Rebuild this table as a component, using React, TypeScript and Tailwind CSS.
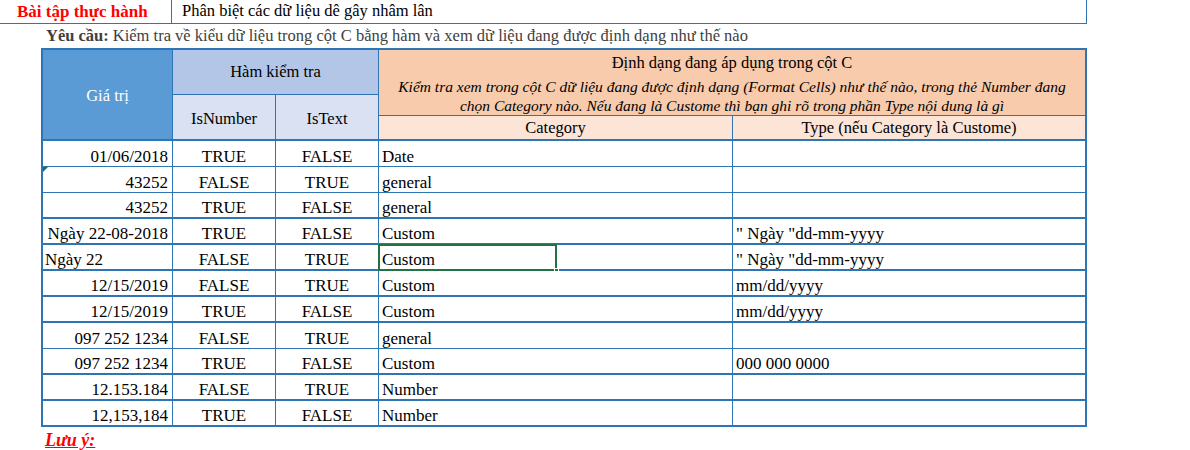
import React from "react";

const rows = [
  { v: "01/06/2018", right: true, n: "TRUE", t: "FALSE", cat: "Date", type: "", thin: true },
  { v: "43252", right: true, n: "FALSE", t: "TRUE", cat: "general", type: "", thin: true, flag: true },
  { v: "43252", right: true, n: "TRUE", t: "FALSE", cat: "general", type: "" },
  { v: "Ngày 22-08-2018", right: true, n: "TRUE", t: "FALSE", cat: "Custom", type: "\" Ngày \"dd-mm-yyyy" },
  { v: "Ngày 22", right: false, n: "FALSE", t: "TRUE", cat: "Custom", type: "\" Ngày \"dd-mm-yyyy", selected: true },
  { v: "12/15/2019", right: true, n: "FALSE", t: "TRUE", cat: "Custom", type: "mm/dd/yyyy" },
  { v: "12/15/2019", right: true, n: "TRUE", t: "FALSE", cat: "Custom", type: "mm/dd/yyyy" },
  { v: "097 252 1234", right: true, n: "FALSE", t: "TRUE", cat: "general", type: "", thin: true },
  { v: "097 252 1234", right: true, n: "TRUE", t: "FALSE", cat: "Custom", type: "000 000 0000" },
  { v: "12.153.184", right: true, n: "FALSE", t: "TRUE", cat: "Number", type: "" },
  { v: "12,153,184", right: true, n: "TRUE", t: "FALSE", cat: "Number", type: "" },
];

export default function App() {
  return (
    <div className="w-[1190px] h-[450px] bg-white text-black text-[17px] leading-none" style={{ fontFamily: '"Liberation Serif", "Times New Roman", serif' }}>
      {/* title row */}
      <div className="flex h-[24px] w-[1087px] border-b border-r border-[#2e75b6]">
        <div className="w-[172px] border-r border-[#2e75b6] pl-[17px] flex items-center font-bold text-[#ff0000]">Bài tập thực hành</div>
        <div className="pl-[10px] flex items-center text-[16.5px]">Phân biệt các dữ liệu dê gây nhâm lân</div>
      </div>

      <div className="h-[24px] pl-[46px] flex items-center text-[#404040] text-[16.5px]">
        <span className="font-bold mr-[4px]">Yêu cầu:</span>
        <span>Kiểm tra về kiểu dữ liệu trong cột C bằng hàm và xem dữ liệu đang được định dạng như thế nào</span>
      </div>

      <div className="ml-[41px] w-[1046px] border-2 border-[#2e75b6]">
        {/* header */}
        <div className="grid grid-cols-[129px_102px_102px_353px_352px] grid-rows-[44px_20px_23px] gap-px bg-[#2e75b6] border-b-2 border-[#2e75b6] text-[16.5px]">
          <div className="row-span-3 bg-[#5b9bd5] text-white flex items-center justify-center pt-[4px]">Giá trị</div>
          <div className="col-span-2 bg-[#b4c6e7] flex items-center justify-center pt-[1px]">Hàm kiểm tra</div>
          <div className="col-span-2 row-span-2 bg-[#f8cbad] flex flex-col items-center pt-[4px]">
            <div className="h-[18px] flex items-center">Định dạng đang áp dụng trong cột C</div>
            <div className="italic text-[15.5px] leading-[19px] text-center mt-[5px] whitespace-nowrap">
              <div>Kiểm tra xem trong cột C dữ liệu đang được định dạng (Format Cells) như thế nào, trong thẻ Number đang</div>
              <div>chọn Category nào. Nếu đang là Custome thì bạn ghi rõ trong phần Type nội dung là gì</div>
            </div>
          </div>
          <div className="row-span-2 bg-[#d9e1f2] flex items-center justify-center pt-[5px]">IsNumber</div>
          <div className="row-span-2 bg-[#d9e1f2] flex items-center justify-center pt-[5px]">IsText</div>
          <div className="bg-[#fce4d6] flex items-center justify-center pt-[2px]">Category</div>
          <div className="bg-[#fce4d6] flex items-center justify-center pt-[2px]">Type (nếu Category là Custome)</div>
        </div>

        {/* data */}
        {rows.map((r, i) => {
          const last = i === rows.length - 1;
          return (
            <div
              key={i}
              className={`grid grid-cols-[129px_102px_102px_353px_352px] gap-x-px bg-[#2e75b6] ${last ? "h-[24px]" : r.thin ? "h-[26px] border-b border-[#2e75b6]" : "h-[26px] border-b-2 border-[#2e75b6]"}`}
            >
              <div className={`relative bg-white flex items-end pb-[1px] ${r.right ? "justify-end pr-[4px]" : "pl-[2px]"}`}>
                {r.flag && (
                  <div className="absolute left-0 top-0 w-0 h-0 border-t-[5px] border-r-[5px] border-t-[#217346] border-r-transparent" />
                )}
                {r.v}
              </div>
              <div className="bg-white flex items-end pb-[1px] justify-center">{r.n}</div>
              <div className="bg-white flex items-end pb-[1px] justify-center">{r.t}</div>
              <div className="relative bg-white flex items-end pb-[1px] pl-[3px]">
                {r.cat}
                {r.selected && (
                  <div className="absolute left-[-1px] top-[-1px] w-[179px] h-[27px] border-2 border-[#217346]">
                    <div className="absolute right-[-4px] bottom-[-4px] w-[5px] h-[5px] bg-[#217346] border border-white" />
                  </div>
                )}
              </div>
              <div className="bg-white flex items-end pb-[1px] pl-[3px]">{r.type}</div>
            </div>
          );
        })}
      </div>

      <div className="pl-[45px] pt-[4px] font-bold italic underline text-[#ff0000] text-[18px]">Lưu ý:</div>
    </div>
  );
}
